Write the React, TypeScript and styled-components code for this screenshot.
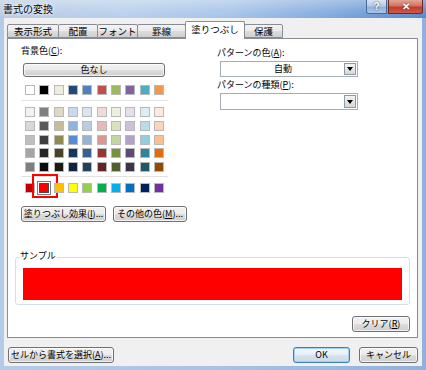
import { createGlobalStyle, styled } from "styled-components";

const GlobalStyle = createGlobalStyle`
  html, body {
    margin: 0;
    padding: 0;
    background: #ffffff;
  }
  body {
    font-family: "Noto Sans CJK JP", "Liberation Sans", sans-serif;
    color: #000;
  }
`;

const Window = styled.div`
  width: 426px;
  height: 370px;
  display: flex;
  flex-direction: column;
  background: linear-gradient(to right, #b4cbe8 0%, #a9c3e4 50%, #8fb2dd 100%);
  overflow: hidden;
`;

const TitleBar = styled.div`
  height: 18px;
  display: flex;
  align-items: flex-start;
  padding: 0 3px 0 3px;
  background:
    linear-gradient(to bottom, rgba(255, 255, 255, 0.35) 0%, rgba(255, 255, 255, 0.1) 60%, rgba(255, 255, 255, 0) 100%),
    linear-gradient(to right, #b9cbe2 0%, #b7cfec 30%, #a4c2e8 55%, #7ea8dc 78%, #5488c9 100%);
`;

const Title = styled.span`
  font-size: 10px;
  line-height: 17px;
  color: #000;
  text-shadow: 0 0 4px #fff, 0 0 2px #fff;
`;

const Controls = styled.div`
  margin-left: auto;
  display: flex;
  gap: 1px;
`;

const CaptionButton = styled.div<{ $close?: boolean }>`
  width: ${(p) => (p.$close ? 35 : 21)}px;
  height: 14px;
  box-sizing: border-box;
  border: 1px solid ${(p) => (p.$close ? "#6d2a24" : "#4c6a93")};
  border-top: none;
  border-radius: ${(p) => (p.$close ? "0 0 3px 0" : "0 0 0 3px")};
  background: ${(p) =>
    p.$close
      ? "linear-gradient(to bottom, #e2a498 0%, #d27363 45%, #c13c28 55%, #d1594a 100%)"
      : "linear-gradient(to bottom, #d9e6f5 0%, #b3cbe8 45%, #93b1da 55%, #aac5e6 100%)"};
  color: #fff;
  font-family: "Liberation Sans", sans-serif;
  font-weight: bold;
  font-size: 10px;
  line-height: 13px;
  text-align: center;
  text-shadow: 0 0 2px #333;
`;

const Body = styled.div`
  flex: 1;
  margin: 0 4px 4px 4px;
  padding: 3px 4px 3px 3px;
  background: #f0f0f0;
  display: flex;
  flex-direction: column;
`;

const TabStrip = styled.div`
  height: 17px;
  display: flex;
  align-items: flex-end;
`;

const Tab = styled.div<{ $w: number; $active?: boolean }>`
  position: relative;
  z-index: ${(p) => (p.$active ? 1 : 0)};
  width: ${(p) => p.$w}px;
  height: ${(p) => (p.$active ? 18 : 14)}px;
  margin-right: -1px;
  margin-bottom: ${(p) => (p.$active ? -1 : 0)}px;
  box-sizing: border-box;
  border: 1px solid #898c95;
  border-bottom: ${(p) => (p.$active ? "none" : "1px solid #898c95")};
  border-radius: 2px 2px 0 0;
  background: ${(p) =>
    p.$active ? "#ffffff" : "linear-gradient(to bottom, #f3f3f3 0%, #ebebeb 50%, #dddddd 51%, #cfcfcf 100%)"};
  font-size: 9.5px;
  line-height: ${(p) => (p.$active ? 15 : 12)}px;
  text-align: center;
`;

const Panel = styled.div`
  height: 300px;
  box-sizing: border-box;
  border: 1px solid #898c95;
  background: #ffffff;
  padding: 6px 7px 0 7px;
  display: flex;
  flex-direction: column;
`;

const TopSection = styled.div`
  display: flex;
  padding-left: 6px;
`;

const LeftColumn = styled.div`
  width: 196px;
  display: flex;
  flex-direction: column;
`;

const RightColumn = styled.div`
  display: flex;
  flex-direction: column;
`;

const Label = styled.div<{ $top?: number }>`
  font-size: 9px;
  line-height: 12px;
  margin-top: ${(p) => p.$top ?? 0}px;
  white-space: nowrap;
`;

const Button = styled.div<{ $w: number; $h?: number; $default?: boolean }>`
  width: ${(p) => p.$w}px;
  height: ${(p) => p.$h ?? 16}px;
  box-sizing: border-box;
  border: 1px solid ${(p) => (p.$default ? "#3c7fb1" : "#707070")};
  border-radius: 3px;
  background: ${(p) =>
    p.$default
      ? "linear-gradient(to bottom, #f2f7fb 0%, #e8f0f7 50%, #d7e4ef 51%, #cad9e7 100%)"
      : "linear-gradient(to bottom, #f2f2f2 0%, #ebebeb 50%, #dddddd 51%, #cfcfcf 100%)"};
  box-shadow: inset 0 0 0 1px ${(p) => (p.$default ? "#9fd2f3" : "rgba(255, 255, 255, 0.7)")};
  font-size: 9px;
  line-height: ${(p) => (p.$h ?? 16) - 2}px;
  text-align: center;
  white-space: nowrap;
`;

const NoColorButton = styled(Button)`
  margin: 6px 0 0 2px;
`;

const SwatchRow = styled.div<{ $top?: number }>`
  width: 139px;
  margin: ${(p) => p.$top ?? 0}px 0 0 4px;
  display: flex;
  justify-content: space-between;
`;

const TintGrid = styled.div`
  margin-top: 6px;
  display: flex;
  flex-direction: column;
  gap: 3.75px;
`;

const Swatch = styled.span<{ $color: string; $selected?: boolean }>`
  position: relative;
  width: 10px;
  height: 10px;
  box-sizing: border-box;
  border: 1px solid ${(p) => (p.$selected ? "#4a4a4a" : "#b9b9b9")};
  background: ${(p) => p.$color};
  box-shadow: ${(p) => (p.$selected ? "0 0 0 1px #ffffff, 0 0 0 2px #7a7a7a" : "none")};
`;

const Highlight = styled.span`
  position: absolute;
  left: -8px;
  top: -10px;
  width: 26px;
  height: 24px;
  box-sizing: border-box;
  border: 2px solid #ff0000;
`;

const Separator = styled.div<{ $top: number }>`
  width: 147px;
  height: 1px;
  margin-top: ${(p) => p.$top}px;
  background: #e2e2e2;
`;

const ButtonRow = styled.div`
  display: flex;
  gap: 7px;
  margin-top: 13px;
`;

const Combo = styled.div<{ $h: number }>`
  width: 138px;
  height: ${(p) => p.$h}px;
  margin: 2px 0 0 3px;
  box-sizing: border-box;
  border: 1px solid #a5acb5;
  background: #fff;
  display: flex;
  padding: 1px;
`;

const ComboText = styled.div`
  flex: 1;
  font-size: 9px;
  line-height: 12px;
  text-align: center;
`;

const ComboArrow = styled.div`
  width: 12px;
  box-sizing: border-box;
  border: 1px solid #8f9aa8;
  background: linear-gradient(to bottom, #f3f3f3 0%, #e6e6e6 50%, #d6d6d6 100%);
  display: flex;
  align-items: center;
  justify-content: center;

  &::after {
    content: "";
    width: 0;
    height: 0;
    border-left: 3px solid transparent;
    border-right: 3px solid transparent;
    border-top: 4px solid #000;
  }
`;

const SampleGroup = styled.div`
  position: relative;
  margin-top: 35px;
  height: 48px;
  box-sizing: border-box;
  border: 1px solid #d5dfe5;
  border-radius: 3px;
  padding: 10px 7px 4px 7px;
`;

const GroupLegend = styled.span`
  position: absolute;
  left: 3px;
  top: -8px;
  padding: 0 1px;
  background: #fff;
  font-size: 9px;
  line-height: 12px;
`;

const SampleFill = styled.div`
  height: 32px;
  background: #ff0000;
`;

const ClearButton = styled(Button)`
  align-self: flex-end;
  margin-top: 11px;
`;

const Footer = styled.div`
  margin-top: 9px;
  display: flex;
  gap: 9px;
  padding-left: 1px;
`;

const FooterSpacer = styled.div`
  flex: 1;
`;

const themeRow = ["#FFFFFF", "#000000", "#EEECE1", "#1F497D", "#4F81BD", "#C0504D", "#9BBB59", "#8064A2", "#4BACC6", "#F79646"];

const tintRows = [
  ["#F2F2F2", "#7F7F7F", "#DDD9C3", "#C6D9F0", "#DBE5F1", "#F2DCDB", "#EBF1DD", "#E5E0EC", "#DBEEF3", "#FDEADA"],
  ["#D8D8D8", "#595959", "#C4BD97", "#8DB3E2", "#B8CCE4", "#E5B9B7", "#D7E3BC", "#CCC1D9", "#B7DDE8", "#FBD5B5"],
  ["#BFBFBF", "#3F3F3F", "#938953", "#548DD4", "#95B3D7", "#D99694", "#C3D69B", "#B2A2C7", "#92CDDC", "#FAC08F"],
  ["#A5A5A5", "#262626", "#494429", "#17365D", "#366092", "#953734", "#76923C", "#5F497A", "#31859B", "#E36C09"],
  ["#7F7F7F", "#0C0C0C", "#1D1B10", "#0F243E", "#244061", "#632423", "#4F6128", "#3F3148", "#205867", "#974806"],
];

const standardRow = ["#C00000", "#FF0000", "#FFC000", "#FFFF00", "#92D050", "#00B050", "#00B0F0", "#0070C0", "#002060", "#7030A0"];

const tabs = [
  { label: "表示形式", w: 52 },
  { label: "配置", w: 40 },
  { label: "フォント", w: 41 },
  { label: "罫線", w: 49 },
  { label: "塗りつぶし", w: 60, active: true },
  { label: "保護", w: 39 },
];

export default function App() {
  return (
    <>
      <GlobalStyle />
      <Window>
        <TitleBar>
          <Title>書式の変換</Title>
          <Controls>
            <CaptionButton>?</CaptionButton>
            <CaptionButton $close>✕</CaptionButton>
          </Controls>
        </TitleBar>
        <Body>
          <TabStrip>
            {tabs.map((t) => (
              <Tab key={t.label} $w={t.w} $active={t.active}>
                {t.label}
              </Tab>
            ))}
          </TabStrip>
          <Panel>
            <TopSection>
              <LeftColumn>
                <Label>
                  背景色(<u>C</u>):
                </Label>
                <NoColorButton $w={142} $h={14}>
                  色なし
                </NoColorButton>
                <SwatchRow $top={8}>
                  {themeRow.map((c, i) => (
                    <Swatch key={i} $color={c} />
                  ))}
                </SwatchRow>
                <Separator $top={5} />
                <TintGrid>
                  {tintRows.map((row, r) => (
                    <SwatchRow key={r}>
                      {row.map((c, i) => (
                        <Swatch key={i} $color={c} />
                      ))}
                    </SwatchRow>
                  ))}
                </TintGrid>
                <Separator $top={4} />
                <SwatchRow $top={6}>
                  {standardRow.map((c, i) => (
                    <Swatch key={i} $color={c} $selected={i === 1}>
                      {i === 1 && <Highlight />}
                    </Swatch>
                  ))}
                </SwatchRow>
                <ButtonRow>
                  <Button $w={85}>
                    塗りつぶし効果(<u>I</u>)...
                  </Button>
                  <Button $w={74}>
                    その他の色(<u>M</u>)...
                  </Button>
                </ButtonRow>
              </LeftColumn>
              <RightColumn>
                <Label $top={2}>
                  パターンの色(<u>A</u>):
                </Label>
                <Combo $h={16}>
                  <ComboText>自動</ComboText>
                  <ComboArrow />
                </Combo>
                <Label $top={2}>
                  パターンの種類(<u>P</u>):
                </Label>
                <Combo $h={17}>
                  <ComboText />
                  <ComboArrow />
                </Combo>
              </RightColumn>
            </TopSection>
            <SampleGroup>
              <GroupLegend>サンプル</GroupLegend>
              <SampleFill />
            </SampleGroup>
            <ClearButton $w={58}>
              クリア(<u>R</u>)
            </ClearButton>
          </Panel>
          <Footer>
            <Button $w={106}>
              セルから書式を選択(<u>A</u>)...
            </Button>
            <FooterSpacer />
            <Button $w={57} $default>
              OK
            </Button>
            <Button $w={59}>キャンセル</Button>
          </Footer>
        </Body>
      </Window>
    </>
  );
}
